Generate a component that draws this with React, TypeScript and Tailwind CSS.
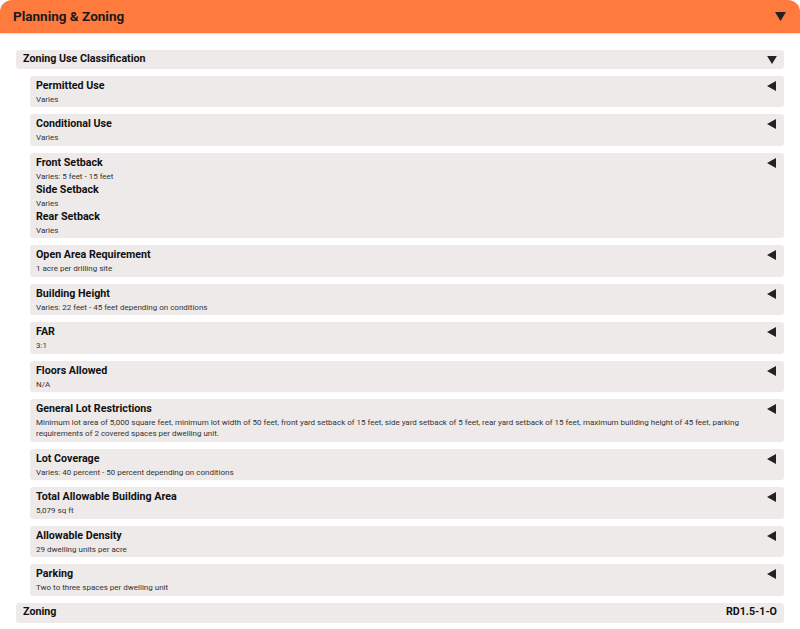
import React from 'react'

type Entry = { label: string; value: string }

type Item = { entries: Entry[] }

const items: Item[] = [
  { entries: [{ label: 'Permitted Use', value: 'Varies' }] },
  { entries: [{ label: 'Conditional Use', value: 'Varies' }] },
  {
    entries: [
      { label: 'Front Setback', value: 'Varies: 5 feet - 15 feet' },
      { label: 'Side Setback', value: 'Varies' },
      { label: 'Rear Setback', value: 'Varies' },
    ],
  },
  { entries: [{ label: 'Open Area Requirement', value: '1 acre per drilling site' }] },
  {
    entries: [
      { label: 'Building Height', value: 'Varies: 22 feet - 45 feet depending on conditions' },
    ],
  },
  { entries: [{ label: 'FAR', value: '3:1' }] },
  { entries: [{ label: 'Floors Allowed', value: 'N/A' }] },
  {
    entries: [
      {
        label: 'General Lot Restrictions',
        value:
          'Minimum lot area of 5,000 square feet, minimum lot width of 50 feet, front yard setback of 15 feet, side yard setback of 5 feet, rear yard setback of 15 feet, maximum building height of 45 feet, parking requirements of 2 covered spaces per dwelling unit.',
      },
    ],
  },
  {
    entries: [
      { label: 'Lot Coverage', value: 'Varies: 40 percent - 50 percent depending on conditions' },
    ],
  },
  { entries: [{ label: 'Total Allowable Building Area', value: '5,079 sq ft' }] },
  { entries: [{ label: 'Allowable Density', value: '29 dwelling units per acre' }] },
  { entries: [{ label: 'Parking', value: 'Two to three spaces per dwelling unit' }] },
]

const Down = ({ className }: { className: string }) => (
  <svg viewBox="0 0 11 9" className={className}>
    <polygon points="0,0 11,0 5.5,9" fill="currentColor" />
  </svg>
)

const Left = () => (
  <svg viewBox="0 0 9 10" className="w-[9px] h-[10px] text-[#222]">
    <polygon points="9,0 9,10 0,5" fill="currentColor" />
  </svg>
)

const DetailRow = ({ item }: { item: Item }) => (
  <div className="flex justify-between rounded-[3px] bg-[#eeeae9] pl-[6px] pr-[8px] pt-[2px] pb-[2.2px]">
    <div className="flex flex-col pr-[24px]">
      {item.entries.map((e) => (
        <div key={e.label}>
          <div className="text-[10.7px] leading-[16px] font-bold text-[#111]">{e.label}</div>
          <div className="text-[8px] leading-[11px] text-[#333]">{e.value}</div>
        </div>
      ))}
    </div>
    <div className="pt-[3px] shrink-0">
      <Left />
    </div>
  </div>
)

export default function App() {
  return (
    <div className="w-[800px] h-[629px] overflow-hidden bg-white font-['Roboto',sans-serif]">
      <header className="h-[33px] rounded-t-[12px] bg-[#ff7a3d] flex items-center justify-between pl-[13px] pr-[14px] shadow-[0_1px_2px_rgba(0,0,0,0.15)]">
        <h1 className="text-[13.5px] font-bold text-[#1a1a1a]">Planning &amp; Zoning</h1>
        <Down className="w-[11px] h-[9px] text-[#222]" />
      </header>

      <div className="px-[16px] pt-[17px] flex flex-col gap-[7px]">
        <div className="h-[19px] rounded-[3px] bg-[#eeeae9] flex items-center justify-between pl-[7px] pr-[7px]">
          <span className="text-[10.7px] font-bold text-[#111]">Zoning Use Classification</span>
          <Down className="w-[10px] h-[8px] text-[#222]" />
        </div>

        <div className="ml-[14px] flex flex-col gap-[7.3px]">
          {items.map((item) => (
            <DetailRow key={item.entries[0].label} item={item} />
          ))}
        </div>

        <div className="h-[20px] rounded-[3px] bg-[#eeeae9] flex items-center justify-between pl-[7px] pr-[7px]">
          <span className="text-[10.7px] font-bold text-[#111]">Zoning</span>
          <span className="text-[10.7px] font-bold text-[#111]">RD1.5-1-O</span>
        </div>
      </div>
    </div>
  )
}
